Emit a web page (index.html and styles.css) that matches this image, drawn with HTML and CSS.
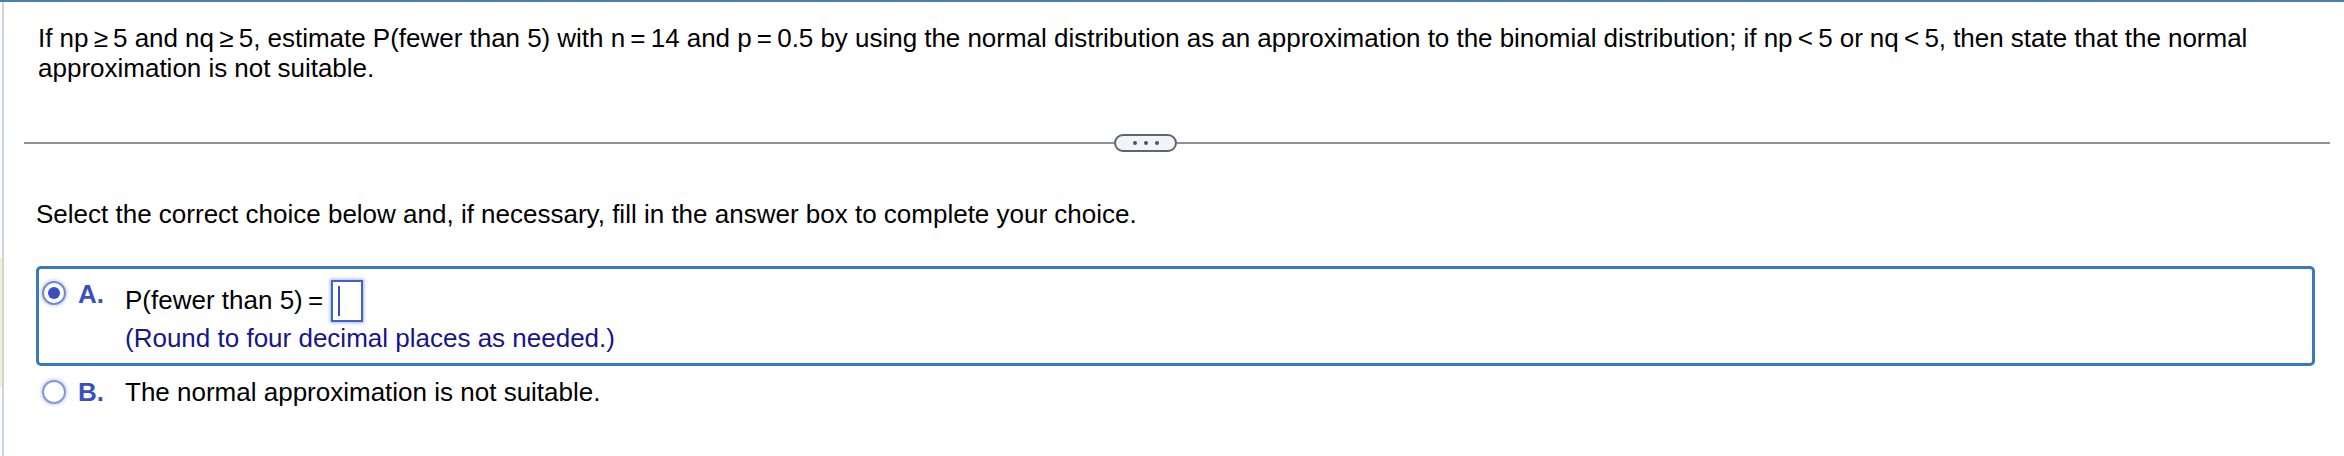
FILE: index.html
```html
<!DOCTYPE html>
<html lang="en">
<head>
<meta charset="utf-8">
<title>Normal approximation to the binomial</title>
<link rel="stylesheet" href="styles.css">
</head>
<body>
<div class="frame">
  <div class="gutter"><div class="flag"></div></div>
  <div class="content">
    <p class="question">If np&#8201;≥&#8201;5 and nq&#8201;≥&#8201;5, estimate P(fewer than 5) with n&#8201;=&#8201;14 and p&#8201;=&#8201;0.5 by using the normal distribution as an approximation to the binomial distribution; if np&#8201;&lt;&#8201;5 or nq&#8201;&lt;&#8201;5, then state that the normal approximation is not suitable.</p>

    <div class="rule">
      <div class="rule-line rule-left"></div>
      <button class="more" type="button" aria-label="More"><span class="dot"></span><span class="dot"></span><span class="dot"></span></button>
      <div class="rule-line rule-right"></div>
    </div>

    <p class="instruction">Select the correct choice below and, if necessary, fill in the answer box to complete your choice.</p>

    <div class="choices">
      <div class="choice selected">
        <span class="radio checked"><span class="radio-dot"></span></span>
        <span class="letter letter-a">A.</span>
        <div class="choice-body">
          <div class="answer-line">
            <span>P(fewer than 5)&#8201;=</span>
            <span class="answer-box"><span class="caret"></span></span>
          </div>
          <div class="hint">(Round to four decimal places as needed.)</div>
        </div>
      </div>
      <div class="choice choice-b">
        <span class="radio"></span>
        <span class="letter">B.</span>
        <div class="choice-body">
          <div class="plain-line">The normal approximation is not suitable.</div>
        </div>
      </div>
    </div>
  </div>
</div>
</body>
</html>
```

FILE: styles.css
```css
html, body {
  margin: 0;
  padding: 0;
  background: #ffffff;
}

body {
  font-family: "Liberation Sans", Arial, Helvetica, sans-serif;
  font-size: 26px;
  line-height: 30px;
  color: #000000;
  width: 2344px;
  height: 456px;
  overflow: hidden;
}

.frame {
  display: flex;
  border-top: 2px solid #4a7eab;
  height: 454px;
}

.gutter {
  width: 2px;
  flex: none;
}

.flag {
  margin-top: 256px;
  height: 129px;
  background: #f6eecb;
}

.content {
  flex: 1;
  border-left: 2px solid #cdd3e1;
  padding-top: 21px;
}

.question {
  margin: 0;
  padding: 0 40px 0 34px;
  word-spacing: -0.15px;
}

.rule {
  display: flex;
  align-items: center;
  height: 18px;
  margin: 51px 14px 0 20px;
}

.rule-line {
  height: 2px;
  background: #8a929c;
}

.rule-left {
  width: 1090px;
  flex: none;
}

.rule-right {
  flex: 1;
}

.more {
  box-sizing: border-box;
  width: 63px;
  height: 18px;
  padding: 0;
  margin: 0;
  border: 2px solid #5b6670;
  border-radius: 9px;
  background: #f2f4f7;
  display: flex;
  align-items: center;
  justify-content: center;
  gap: 7px;
}

.dot {
  width: 4px;
  height: 4px;
  border-radius: 50%;
  background: #4b545e;
}

.instruction {
  margin: 47px 0 0 0;
  padding-left: 32px;
}

.choices {
  margin: 37px 29px 0 32px;
}

.choice {
  display: flex;
  align-items: flex-start;
  border: 3px solid transparent;
  border-radius: 5px;
  padding: 6px 0 10px 3px;
}

.choice-b {
  padding-top: 8px;
}

.choice.selected {
  border-color: #3a78c4;
  padding-top: 10px;
}

.radio {
  box-sizing: border-box;
  flex: none;
  width: 24px;
  height: 24px;
  margin-top: 3px;
  border: 2px solid #8299dc;
  border-radius: 50%;
  background: #ffffff;
  box-shadow: 0 0 2px 2px rgba(160, 178, 232, 0.35);
  display: flex;
  align-items: center;
  justify-content: center;
}

.radio.checked {
  border-color: #7389d6;
  margin-top: 2px;
}

.radio-dot {
  width: 12px;
  height: 12px;
  border-radius: 50%;
  background: #3a50c2;
}

.letter {
  flex: none;
  width: 47px;
  margin-left: 12px;
  font-weight: bold;
  color: #3b4fbf;
}

.letter-a {
  margin-top: 0;
}

.choice-body {
  display: flex;
  flex-direction: column;
}

.answer-line {
  display: flex;
  align-items: center;
  height: 44px;
  gap: 8px;
}

.answer-line > span:first-child {
  margin-top: -3px;
}

.answer-box {
  box-sizing: border-box;
  width: 32px;
  height: 42px;
  border: 2px solid #3e63c8;
  background: #ffffff;
  box-shadow: 0 0 3px 1px rgba(90, 120, 215, 0.55);
  padding: 4px 0 0 5px;
}

.caret {
  display: block;
  width: 2px;
  height: 30px;
  background: #3550b6;
}

.hint {
  color: #16168a;
}
```
